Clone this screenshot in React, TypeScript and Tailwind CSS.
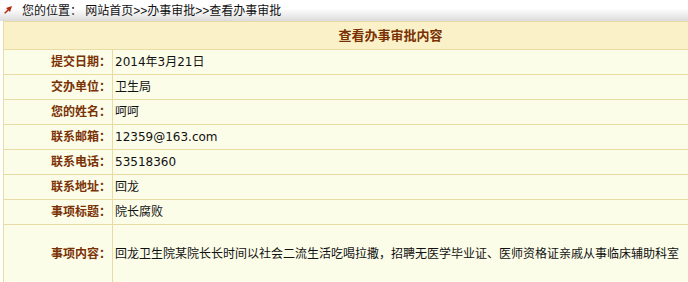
import React from "react";

const rows: [string, string][] = [
  ["提交日期：", "2014年3月21日"],
  ["交办单位：", "卫生局"],
  ["您的姓名：", "呵呵"],
  ["联系邮箱：", "12359@163.com"],
  ["联系电话：", "53518360"],
  ["联系地址：", "回龙"],
  ["事项标题：", "院长腐败"],
];

export default function App() {
  return (
    <div
      className="w-[688px] h-[282px] overflow-hidden bg-white text-[12px] leading-none"
      style={{ fontFamily: '"DejaVu Sans", Verdana, "Noto Sans CJK SC", sans-serif' }}
    >
      <div className="h-[21px] flex items-center bg-gradient-to-b from-white from-40% to-[#dcdcdc] pl-[4px]">
        <svg width="8" height="8" viewBox="0 0 8 8" className="mr-[10px] -mt-[2px]">
          <path d="M2 2 L8 0 L6 6 L4.6 4.4 L1.3 7.8 L0.2 6.7 L3.6 3.4 Z" fill="#b22a10" />
        </svg>
        <span
          className="text-[#111] whitespace-nowrap"
          style={{ fontFamily: '"Liberation Sans", Arial, "Noto Sans CJK SC", sans-serif' }}
        >
          您的位置：&nbsp;网站首页&gt;&gt;办事审批&gt;&gt;查看办事审批
        </span>
      </div>
      <div className="pl-[3px]">
        <table className="w-[775px] border-collapse bg-[#fcfde9]">
          <tbody>
            <tr className="h-[28px] bg-[#faf1c8]">
              <td colSpan={2} className="border border-[#e8dba4] text-center text-[13px] font-bold text-[#7a3205] align-middle">
                查看办事审批内容
              </td>
            </tr>
            {rows.map(([k, v]) => (
              <tr key={k} className="h-[25px]">
                <td className="w-[109px] border border-[#e8dba4] text-right pr-[1px] font-bold text-[#7a3205] align-middle whitespace-nowrap">
                  {k}
                </td>
                <td className="border border-[#e8dba4] pl-[2px] text-[#111] align-middle whitespace-nowrap">{v}</td>
              </tr>
            ))}
            <tr className="h-[58px]">
              <td className="w-[109px] border border-[#e8dba4] text-right pr-[1px] font-bold text-[#7a3205] align-middle whitespace-nowrap">
                事项内容：
              </td>
              <td className="border border-[#e8dba4] pl-[2px] text-[#111] align-middle whitespace-nowrap">
                回龙卫生院某院长长时间以社会二流生活吃喝拉撒，招聘无医学毕业证、医师资格证亲戚从事临床辅助科室
              </td>
            </tr>
          </tbody>
        </table>
      </div>
    </div>
  );
}
